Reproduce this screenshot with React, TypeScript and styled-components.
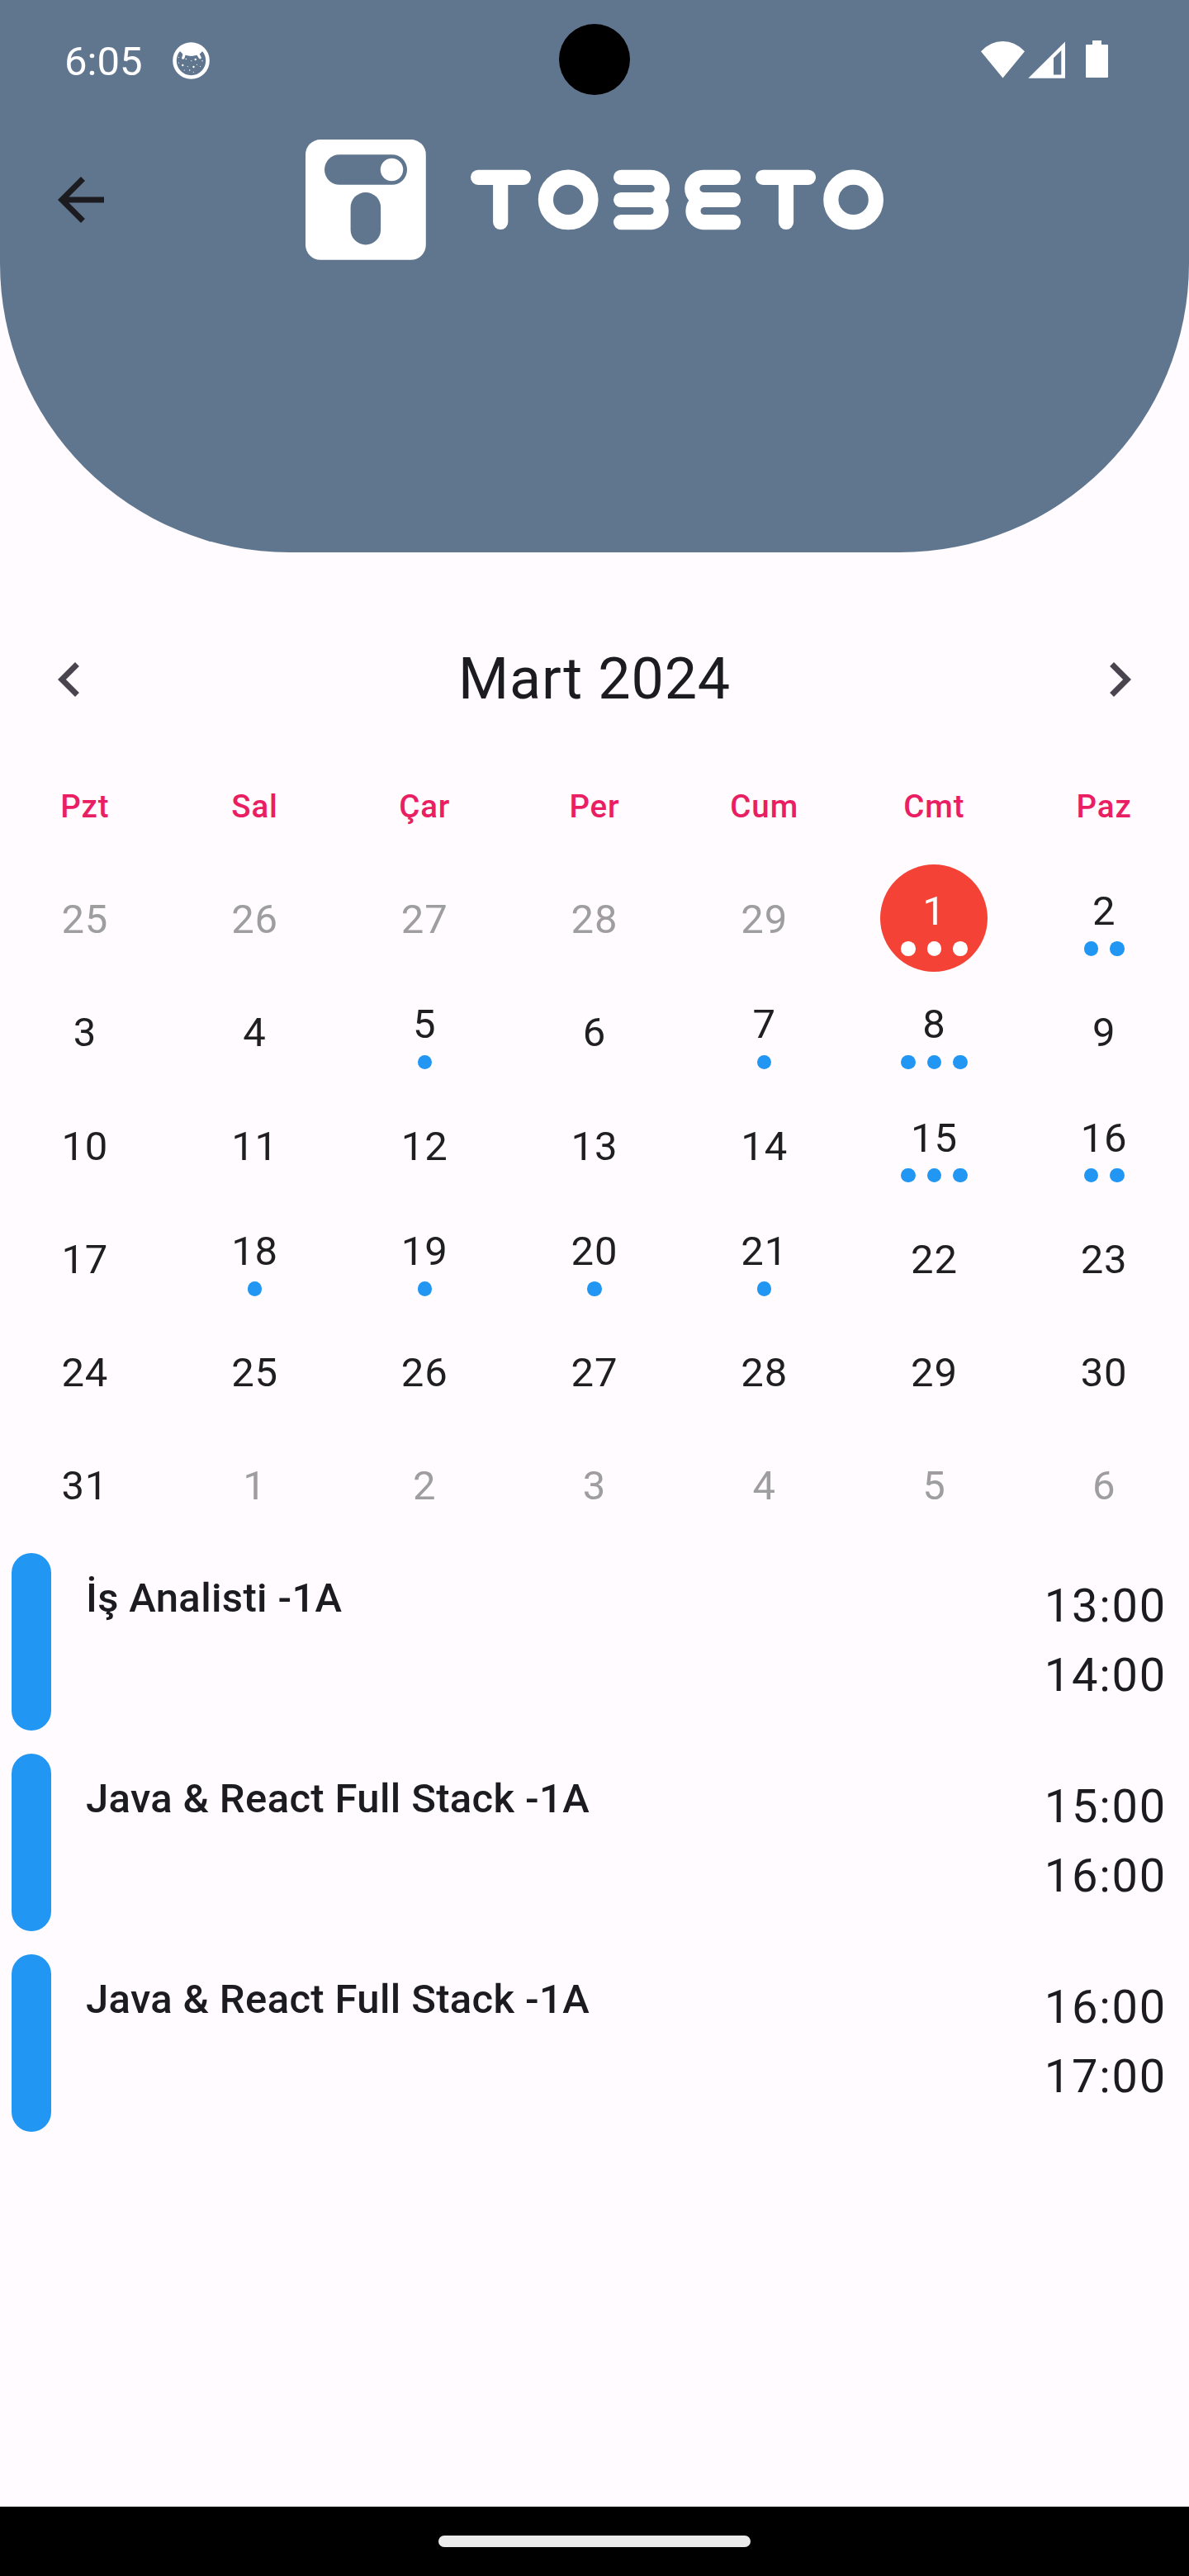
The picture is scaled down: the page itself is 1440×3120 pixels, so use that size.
import React from "react";
import styled, { createGlobalStyle } from "styled-components";

const GlobalStyle = createGlobalStyle`
  * { box-sizing: border-box; }
  body { margin: 0; background: #fffbff; }
`;

const Screen = styled.div`
  display: flex;
  flex-direction: column;
  width: 1440px;
  height: 3120px;
  background: #fffbff;
  color: #1c1b1f;
  font-family: Roboto, "Noto Sans", sans-serif;
`;

const Header = styled.header`
  flex: none;
  height: 669px;
  background: #60768e;
  border-radius: 0 0 350px 350px;
`;

const StatusBar = styled.div`
  position: relative;
  display: flex;
  align-items: center;
  justify-content: space-between;
  height: 144px;
  padding: 0 98px 0 78px;
`;

const StatusGroup = styled.div`
  display: flex;
  align-items: center;
`;

const Clock = styled.span`
  width: 131px;
  padding-top: 6px;
  color: #fff;
  font-size: 49px;
  line-height: 58px;
`;

const Camera = styled.div`
  position: absolute;
  left: 677px;
  top: 29px;
  width: 86px;
  height: 86px;
  border-radius: 50%;
  background: #000;
`;

const AppBar = styled.div`
  display: grid;
  grid-template-columns: 314px 702px 1fr;
  align-items: center;
  height: 196px;
  padding-left: 56px;
`;

const IconButton = styled.button`
  display: flex;
  width: 84px;
  height: 84px;
  padding: 0;
  border: 0;
  background: none;
  color: inherit;
`;

const Glyph = styled.svg`
  display: block;
  flex: none;
`;

const MonthBar = styled.div`
  display: flex;
  flex: none;
  align-items: center;
  justify-content: space-between;
  height: 84px;
  margin-top: 112px;
  padding: 0 42px;
  color: #49454f;
`;

const MonthTitle = styled.h1`
  margin: 0;
  padding-bottom: 2px;
  color: #1c1b1f;
  font-size: 70px;
  font-weight: 400;
  line-height: 84px;
  letter-spacing: 0.875px;
`;

const WeekdayRow = styled.div`
  display: grid;
  flex: none;
  grid-template-columns: repeat(7, 1fr);
  height: 89.5px;
  margin-top: 89px;
`;

const Weekday = styled.span`
  color: #e91e63;
  font-size: 38.5px;
  font-weight: 500;
  line-height: 46px;
  letter-spacing: 0.875px;
  text-align: center;
`;

const DayGrid = styled.div`
  display: grid;
  flex: none;
  grid-template-columns: repeat(7, 1fr);
  grid-auto-rows: 137.25px;
  place-items: center;
`;

const Day = styled.div<{ $tone: string; $marked: boolean; $selected: boolean }>`
  display: flex;
  flex-direction: column;
  align-items: center;
  gap: 7.3px;
  width: 130px;
  height: 130px;
  padding-top: ${(p) => (p.$marked ? 28 : 38)}px;
  border-radius: 50%;
  background: ${(p) => (p.$selected ? "#f44336" : "transparent")};
  color: ${(p) => p.$tone};
  font-size: 49px;
  line-height: 58px;
  letter-spacing: 0.875px;
`;

const Dots = styled.div`
  display: flex;
  gap: 14px;
`;

const Dot = styled.i<{ $light: boolean }>`
  width: 17.5px;
  height: 17.5px;
  border-radius: 50%;
  background: ${(p) => (p.$light ? "#fff" : "#2196f3")};
`;

const EventList = styled.div`
  display: flex;
  flex: 1;
  flex-direction: column;
  gap: 28px;
  padding: 14px 27px 0 14px;
`;

const EventRow = styled.div`
  display: flex;
  height: 215px;
`;

const EventBar = styled.div`
  width: 48px;
  height: 215px;
  border-radius: 24px;
  background: #2196f3;
`;

const EventName = styled.div`
  flex: 1;
  padding: 20px 0 0 42px;
  font-size: 49px;
  font-weight: 500;
  line-height: 70px;
  letter-spacing: 0.35px;
`;

const EventTimes = styled.div`
  display: flex;
  flex-direction: column;
  padding-top: 22px;
  font-size: 56px;
  line-height: 84px;
  letter-spacing: 1.75px;
`;

const NavBar = styled.footer`
  display: flex;
  flex: none;
  align-items: center;
  justify-content: center;
  height: 84px;
  background: #000;
`;

const NavHandle = styled.div`
  width: 378px;
  height: 14px;
  border-radius: 7px;
  background: #ebebeb;
`;

const weekdays = ["Pzt", "Sal", "Çar", "Per", "Cum", "Cmt", "Paz"];

const marks: Record<number, number> = {
  1: 3, 2: 2, 5: 1, 7: 1, 8: 3, 15: 3, 16: 2, 18: 1, 19: 1, 20: 1, 21: 1,
};

const days = Array.from({ length: 42 }, (_, i) => {
  if (i < 5) return { label: 25 + i, outside: true, dots: 0 };
  if (i > 35) return { label: i - 35, outside: true, dots: 0 };
  return { label: i - 4, outside: false, dots: marks[i - 4] ?? 0 };
});

const events = [
  { name: "İş Analisti -1A", from: "13:00", to: "14:00" },
  { name: "Java & React Full Stack -1A", from: "15:00", to: "16:00" },
  { name: "Java & React Full Stack -1A", from: "16:00", to: "17:00" },
];

const MaterialIcon = ({ d }: { d: string }) => (
  <Glyph width="84" height="84" viewBox="0 0 24 24" fill="currentColor">
    <path d={d} />
  </Glyph>
);

const speckles = [
  [7.3, 18.5, 0.6], [12.3, 28, 1.2], [16.3, 20.5, 0.7], [7.5, 25, 0.6],
  [22.7, 22.7, 0.6], [27.7, 21, 1.2], [25.5, 30, 1.2], [18.3, 29.5, 0.6],
  [29.5, 27.3, 0.6], [14.3, 34, 0.6], [20.7, 34, 0.8], [25.3, 36.3, 0.6],
  [33.5, 29.5, 0.6], [36, 22.7, 0.7],
];

const NotificationIcon = () => (
  <Glyph width="46" height="50" viewBox="0 -4 46 50" fill="#fff">
    <circle cx="22.5" cy="22.5" r="20" fill="none" stroke="#fff" strokeWidth="4.6" />
    <path d="M8.5 10.5Q22.5 -3 36.5 10.5Q34 13.5 32.7 14.5L35 19Q33.7 21.5 31.8 19.5L29.5 15.8Q22.5 18 15.5 15.8L14.5 19.5Q12.5 21.7 11 19.8L12.4 14.5Z" />
    {speckles.map(([x, y, r]) => (
      <circle key={`${x}-${y}`} cx={x} cy={y} r={r} />
    ))}
  </Glyph>
);

const SystemIcons = () => (
  <Glyph width="154" height="46" viewBox="1188 49 154 46" fill="#fff">
    <path d="M1188 62.3Q1199.5 50 1214.5 50Q1229.5 50 1241 62.3L1214.5 94.6Z" />
    <path fillRule="evenodd" d="M1245.3 94.7L1290 50.5V94.7ZM1276 70.3V90.5H1285.3V61Z" />
    <path d="M1323 49H1334V54H1341a1 1 0 0 1 1 1V93a1 1 0 0 1-1 1H1316a1 1 0 0 1-1-1V55a1 1 0 0 1 1-1H1323Z" />
  </Glyph>
);

const Logo = () => (
  <Glyph width="702" height="146" viewBox="370 169 702 146" role="img" aria-label="Tobeto">
    <rect x="370" y="169" width="145.8" height="145.8" rx="18.2" fill="#fff" />
    <rect x="393" y="187.2" width="100" height="36.6" rx="18.2" fill="#60768e" />
    <circle cx="474.5" cy="205.5" r="13.7" fill="#fff" />
    <rect x="424.6" y="233" width="36.5" height="63.4" rx="18.2" fill="#60768e" />
    <g fill="none" stroke="#fff" strokeWidth="18.2" strokeLinecap="round">
      <path d="M579.1 214.8H633.9M606.2 214.8V269" />
      <circle cx="688.2" cy="241.9" r="27.3" />
      <path d="M752.1 214.8H788.3a13.6 13.6 0 0 1 0 27.2H752.1M788.3 242a13.6 13.6 0 0 1 0 27.1H752.1" />
      <path d="M888 214.8H851.9a13.6 13.6 0 0 0 0 27.2H888M851.9 242a13.6 13.6 0 0 0 0 27.1H888" />
      <path d="M924.2 214.8H979M952 214.8V269" />
      <circle cx="1033.6" cy="241.9" r="27.3" />
    </g>
  </Glyph>
);

export default function App() {
  return (
    <Screen>
      <GlobalStyle />
      <Header>
        <StatusBar>
          <StatusGroup>
            <Clock>6:05</Clock>
            <NotificationIcon />
          </StatusGroup>
          <Camera />
          <SystemIcons />
        </StatusBar>
        <AppBar>
          <IconButton aria-label="Geri">
            <MaterialIcon d="M20 11H7.83l5.59-5.59L12 4l-8 8 8 8 1.41-1.41L7.83 13H20v-2z" />
          </IconButton>
          <Logo />
        </AppBar>
      </Header>
      <MonthBar>
        <IconButton aria-label="Önceki ay">
          <MaterialIcon d="M15.41 7.41L14 6l-6 6 6 6 1.41-1.41L10.83 12z" />
        </IconButton>
        <MonthTitle>Mart 2024</MonthTitle>
        <IconButton aria-label="Sonraki ay">
          <MaterialIcon d="M10 6L8.59 7.41 13.17 12l-4.58 4.59L10 18l6-6z" />
        </IconButton>
      </MonthBar>
      <WeekdayRow>
        {weekdays.map((d) => (
          <Weekday key={d}>{d}</Weekday>
        ))}
      </WeekdayRow>
      <DayGrid>
        {days.map((d, i) => {
          const selected = !d.outside && d.label === 1;
          return (
            <Day
              key={i}
              $selected={selected}
              $marked={d.dots > 0}
              $tone={selected ? "#fff" : d.outside ? "#9e9e9e" : "#1f1f1f"}
            >
              <span>{d.label}</span>
              {d.dots > 0 && (
                <Dots>
                  {Array.from({ length: d.dots }, (_, k) => (
                    <Dot key={k} $light={selected} />
                  ))}
                </Dots>
              )}
            </Day>
          );
        })}
      </DayGrid>
      <EventList>
        {events.map((e) => (
          <EventRow key={e.from}>
            <EventBar />
            <EventName>{e.name}</EventName>
            <EventTimes>
              <span>{e.from}</span>
              <span>{e.to}</span>
            </EventTimes>
          </EventRow>
        ))}
      </EventList>
      <NavBar>
        <NavHandle />
      </NavBar>
    </Screen>
  );
}
